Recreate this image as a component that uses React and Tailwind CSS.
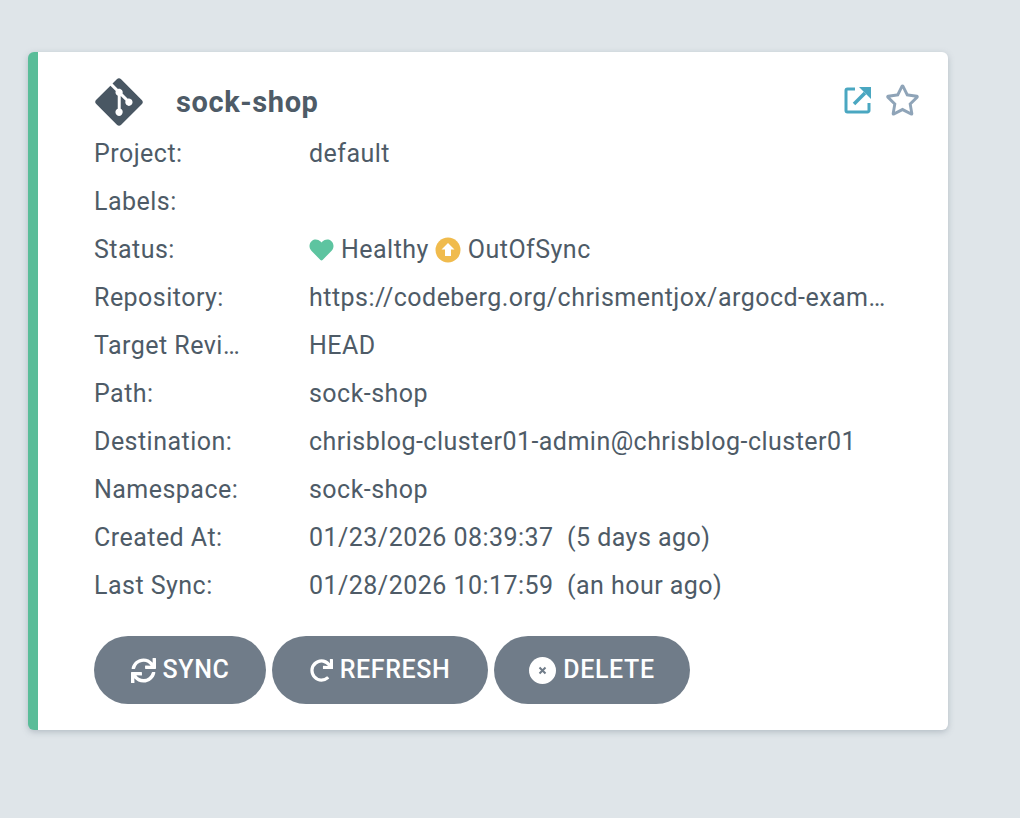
import React from "react";
import { FaGitAlt, FaHeart, FaSync, FaRedo, FaRegStar } from "react-icons/fa";

const rows = [
  ["Project:", "default"],
  ["Labels:", ""],
  ["Status:", "status"],
  ["Repository:", "https://codeberg.org/chrismentjox/argocd-examples.git"],
  ["Target Revision:", "HEAD"],
  ["Path:", "sock-shop"],
  ["Destination:", "chrisblog-cluster01-admin@chrisblog-cluster01"],
  ["Namespace:", "sock-shop"],
  ["Created At:", "01/23/2026 08:39:37  (5 days ago)"],
  ["Last Sync:", "01/28/2026 10:17:59  (an hour ago)"],
];

function Btn({ icon, label, w }) {
  return (
    <button className={`${w} h-[68px] rounded-[34px] bg-[#707c89] text-white flex items-center justify-center gap-[7px] font-medium text-[25px] tracking-[0.6px]`}>
      {icon}
      <span>{label}</span>
    </button>
  );
}

export default function App() {
  return (
    <div className="w-[1020px] h-[818px] bg-[#dfe5e9] pt-[52px] pl-[28px] overflow-hidden font-['Roboto',sans-serif]">
      <div className="w-[920px] h-[678px] bg-white rounded-[6px] border-l-[10px] border-[#5abd99] shadow-[0_2px_6px_rgba(100,115,130,0.35)] pl-[56px] pr-[28px] text-[25px] tracking-[0.47px] text-[#4e5b67]">
        <div className="h-[78px] pt-[25px] flex items-start justify-between">
          <div className="flex items-center gap-[30px] -mt-[1px]">
            <FaGitAlt className="text-[#495763] w-[54px] h-[54px] -mt-[1px] -ml-[2px]" />
            <span className="text-[29px] font-bold leading-[48px] tracking-[0.6px] -mt-[2px]">sock-shop</span>
          </div>
          <div className="flex items-center gap-[13px] mt-[7px]">
            <svg width="28" height="28" viewBox="0 0 28 28" fill="none" className="text-[#4aa7c1]">
              <path d="M11 3H3.5a1.5 1.5 0 0 0-1.5 1.5v20A1.5 1.5 0 0 0 3.5 26h20a1.5 1.5 0 0 0 1.5-1.5V17" stroke="currentColor" strokeWidth="3" />
              <path d="M10 18L21 7" stroke="currentColor" strokeWidth="3.5" />
              <path d="M15 1h12v12z" fill="currentColor" />
            </svg>
            <FaRegStar className="text-[#8fa4b8] w-[35px] h-[32px]" />
          </div>
        </div>
        <div>
          {rows.map(([k, v]) => (
            <div key={k} className="flex h-[48px] items-center leading-[48px]">
              <div className="w-[215px] pr-[64px] shrink-0 truncate">{k}</div>
              <div className="w-[577px] truncate whitespace-pre">
                {v === "status" ? (
                  <span className="flex items-center">
                    <FaHeart className="text-[#5dc4a0] w-[25px] h-[24px] mr-[7px]" />
                    <span>Healthy</span>
                    <svg width="26" height="26" viewBox="0 0 26 26" className="ml-[6px] mr-[7px]">
                      <circle cx="13" cy="13" r="12.5" fill="#f0bb4d" />
                      <path d="M13 6l6.500 6.500H16V19h-6v-6.500H6.500z" fill="#ffffff" />
                    </svg>
                    <span>OutOfSync</span>
                  </span>
                ) : v}
              </div>
            </div>
          ))}
        </div>
        <div className="flex gap-[6px] mt-[26px]">
          <Btn w="w-[172px]" label="SYNC" icon={<FaSync className="w-[25px] h-[25px]" />} />
          <Btn w="w-[216px]" label="REFRESH" icon={<FaRedo className="w-[23px] h-[23px]" />} />
          <Btn
            w="w-[196px]"
            label="DELETE"
            icon={
              <svg width="27" height="27" viewBox="0 0 27 27">
                <circle cx="13.500" cy="13.500" r="13.500" fill="#ffffff" />
                <path d="M10.500 10.500l6 6M16.500 10.500l-6 6" stroke="#707c89" strokeWidth="2" />
              </svg>
            }
          />
        </div>
      </div>
    </div>
  );
}
